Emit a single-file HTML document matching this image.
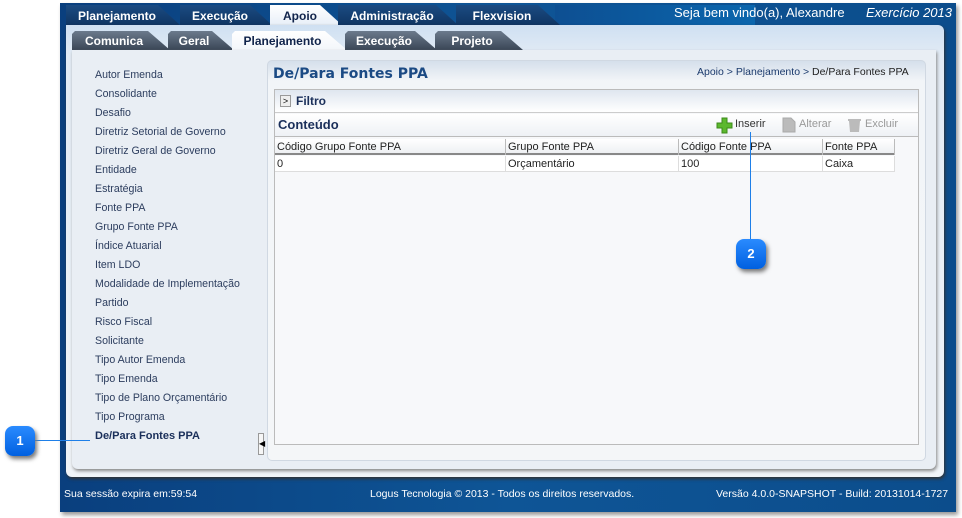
<!DOCTYPE html><html><head><meta charset="utf-8"><style>
*{margin:0;padding:0;box-sizing:border-box}
body{width:962px;height:518px;background:#fff;font-family:"Liberation Sans","DejaVu Sans",sans-serif;position:relative;overflow:hidden}
.a{position:absolute}
.frame{left:60px;top:3px;width:896px;height:509px;background:linear-gradient(90deg,#0a3f7e,#0e5596 50%,#0c4d8c);box-shadow:2px 3px 4px #999}
.t1{top:5px;height:20px;font:bold 12px "Liberation Sans",sans-serif;color:#fff;text-align:center;line-height:22px;clip-path:polygon(0 0,calc(100% - 22px) 0,100% 100%,0 100%);background:linear-gradient(#1b4b82,#0f3563);padding-right:12px}
.t1.on{background:linear-gradient(#fff,#e8eff8);color:#10234a}
.t2{top:31px;height:19px;font:bold 12px "Liberation Sans",sans-serif;color:#fff;text-align:center;line-height:21px;clip-path:polygon(0 3px,3px 0,calc(100% - 22px) 0,100% 100%,0 100%);background:linear-gradient(#6b7a8c,#3a4656);padding-right:14px}
.t2.on{background:linear-gradient(#fff,#f3f6fa);color:#10234a}
.nav div{position:absolute;left:95px;font-size:10.6px;color:#2c3d5e;white-space:nowrap}
.cell{position:absolute;font-size:11px;color:#222;padding-left:2px;line-height:16px;border-right:1px solid #bbb}
.badge{width:30px;height:30px;border-radius:8px;background:linear-gradient(#2a8bff,#0060e0);color:#fff;font:bold 13px "Liberation Sans",sans-serif;text-align:center;line-height:30px;box-shadow:2px 3px 4px #777}
.ft{color:#fff;font-size:10.5px;top:488px}
</style></head><body>
<div class="a frame"></div>
<div class="a" style="left:555px;top:5px;width:200px;height:20px;background:linear-gradient(90deg,#0d4f92,#0b66ad)"></div>
<div class="a t1" style="left:66px;width:114px">Planejamento</div>
<div class="a t1" style="left:180px;width:92px">Execução</div>
<div class="a t1 on" style="left:270px;width:72px">Apoio</div>
<div class="a t1" style="left:338px;width:120px">Administração</div>
<div class="a t1" style="left:456px;width:104px">Flexvision</div>
<div class="a" style="left:674px;top:5px;color:#fff;font-size:13px">Seja bem vindo(a), Alexandre</div>
<div class="a" style="left:866px;top:5px;color:#fff;font-size:13px;font-style:italic">Exercício 2013</div>
<div class="a" style="left:66px;top:25px;width:878px;height:452px;background:linear-gradient(#cfe0f2,#e2ebf5 30px,#f0f4f8);border-radius:0 6px 6px 6px;box-shadow:1px 2px 3px #333"></div>
<div class="a t2" style="left:72px;width:98px">Comunica</div>
<div class="a t2" style="left:168px;width:66px">Geral</div>
<div class="a t2 on" style="left:232px;width:115px">Planejamento</div>
<div class="a t2" style="left:345px;width:92px">Execução</div>
<div class="a t2" style="left:435px;width:88px">Projeto</div>
<div class="a" style="left:72px;top:50px;width:864px;height:419px;background:#e9eef4;border-radius:0 0 6px 6px;box-shadow:1px 2px 3px #888"></div>
<div class="nav">
<div style="top:69px">Autor Emenda</div><div style="top:88px">Consolidante</div><div style="top:107px">Desafio</div><div style="top:126px">Diretriz Setorial de Governo</div><div style="top:145px">Diretriz Geral de Governo</div><div style="top:164px">Entidade</div><div style="top:183px">Estratégia</div><div style="top:202px">Fonte PPA</div><div style="top:221px">Grupo Fonte PPA</div><div style="top:240px">Índice Atuarial</div><div style="top:259px">Item LDO</div><div style="top:278px">Modalidade de Implementação</div><div style="top:297px">Partido</div><div style="top:316px">Risco Fiscal</div><div style="top:335px">Solicitante</div><div style="top:354px">Tipo Autor Emenda</div><div style="top:373px">Tipo Emenda</div><div style="top:392px">Tipo de Plano Orçamentário</div><div style="top:411px">Tipo Programa</div>
<div style="top:430px;font-weight:bold;color:#1a2f5a;font-size:11px">De/Para Fontes PPA</div></div>
<div class="a" style="left:258px;top:433px;width:6px;height:22px;background:#f6f6f6;border:1px solid #999;font-size:8px;line-height:20px">◀</div>
<div class="a" style="left:267px;top:60px;width:659px;height:401px;background:linear-gradient(#d5dfeb,#f2f5f8 20px,#f4f6f8);border-radius:5px;border:1px solid #d0d8e2"></div>
<div class="a" style="left:273px;top:66px;font:bold 14px 'DejaVu Sans',sans-serif;color:#1b4a84">De/Para Fontes PPA</div>
<div class="a" style="left:697px;top:66px;font-size:10.5px;color:#1b3a6c">Apoio &gt; Planejamento &gt; <span style="color:#222">De/Para Fontes PPA</span></div>
<div class="a" style="left:274px;top:89px;width:645px;height:356px;background:#f7f8fa;border:1px solid #bbb"></div>
<div class="a" style="left:275px;top:90px;width:643px;height:23px;background:linear-gradient(#dfe6ef,#fff);border-bottom:1px solid #ccc"></div>
<div class="a" style="left:280px;top:95px;width:11px;height:12px;border:1px solid #999;background:#eee;font-size:9px;line-height:10px;text-align:center">&gt;</div>
<div class="a" style="left:296px;top:94px;font:bold 12px 'Liberation Sans',sans-serif;color:#1a2f5a">Filtro</div>
<div class="a" style="left:275px;top:114px;width:643px;height:23px;background:linear-gradient(#fff,#eef1f5);border-bottom:1px solid #bbb"></div>
<div class="a" style="left:278px;top:117px;font:bold 13px 'Liberation Sans',sans-serif;color:#1a2f5a">Conteúdo</div>
<svg class="a" style="left:716px;top:117px" width="17" height="17"><path d="M6 1h5v5h5v5h-5v5H6v-5H1V6h5z" fill="#5cb82e" stroke="#3c8a1a"/></svg>
<div class="a" style="left:735px;top:118px;font-size:11px;color:#333">Inserir</div>
<svg class="a" style="left:782px;top:117px" width="14" height="16"><path d="M1 1h8l4 4v10H1z" fill="#bbb" stroke="#aaa"/></svg>
<div class="a" style="left:799px;top:118px;font-size:11px;color:#999">Alterar</div>
<svg class="a" style="left:847px;top:117px" width="15" height="16"><path d="M1 2h13v2H1zM2 4h11l-1 11H3z" fill="#bbb"/></svg>
<div class="a" style="left:865px;top:118px;font-size:11px;color:#999">Excluir</div>
<div class="a" style="left:275px;top:139px;width:620px;height:16px;background:linear-gradient(#fff,#eef0f3);border-bottom:2px solid #888"></div>
<div class="cell" style="left:275px;top:139px;width:231px">Código Grupo Fonte PPA</div>
<div class="cell" style="left:506px;top:139px;width:173px">Grupo Fonte PPA</div>
<div class="cell" style="left:679px;top:139px;width:144px">Código Fonte PPA</div>
<div class="cell" style="left:823px;top:139px;width:72px">Fonte PPA</div>
<div class="a" style="left:275px;top:156px;width:620px;height:16px;background:#fff;border-bottom:1px solid #ddd"></div>
<div class="cell" style="left:275px;top:156px;width:231px;border-color:#ddd">0</div>
<div class="cell" style="left:506px;top:156px;width:173px;border-color:#ddd">Orçamentário</div>
<div class="cell" style="left:679px;top:156px;width:144px;border-color:#ddd">100</div>
<div class="cell" style="left:823px;top:156px;width:72px;border-color:#ddd">Caixa</div>
<div class="a" style="left:750px;top:132px;width:1px;height:108px;background:#1e7fe8"></div>
<div class="a badge" style="left:736px;top:239px">2</div>
<div class="a" style="left:32px;top:440px;width:58px;height:1px;background:#1e7fe8"></div>
<div class="a badge" style="left:5px;top:426px">1</div>
<div class="a ft" style="left:64px">Sua sessão expira em:59:54</div>
<div class="a ft" style="left:370px">Logus Tecnologia © 2013 - Todos os direitos reservados.</div>
<div class="a ft" style="left:716px">Versão 4.0.0-SNAPSHOT - Build: 20131014-1727</div>
</body></html>
